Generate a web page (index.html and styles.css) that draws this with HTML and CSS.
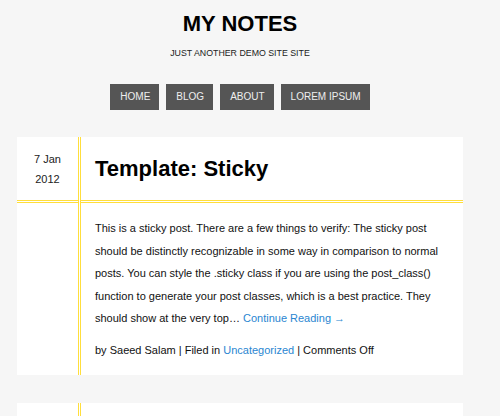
FILE: index.html
```html
<!DOCTYPE html>
<html lang="en">
<head>
<meta charset="utf-8">
<title>My Notes</title>
<link rel="stylesheet" href="styles.css">
</head>
<body>
<header class="site-header">
  <h1 class="site-title">MY NOTES</h1>
  <p class="site-tagline">JUST ANOTHER DEMO SITE SITE</p>
  <nav class="site-nav">
    <a class="nav-item" href="#">HOME</a>
    <a class="nav-item" href="#">BLOG</a>
    <a class="nav-item" href="#">ABOUT</a>
    <a class="nav-item" href="#">LOREM IPSUM</a>
  </nav>
</header>
<main class="posts">
  <article class="post">
    <div class="post-date"><span>7 Jan</span><span>2012</span></div>
    <h2 class="post-title">Template: Sticky</h2>
    <div class="post-side"></div>
    <div class="post-body">
      <p class="post-text">This is a sticky post. There are a few things to verify: The sticky post<br>should be distinctly recognizable in some way in comparison to normal<br>posts. You can style the .sticky class if you are using the post_class()<br>function to generate your post classes, which is a best practice. They<br>should show at the very top&hellip; <a class="link" href="#">Continue Reading &rarr;</a></p>
      <p class="post-meta">by Saeed Salam | Filed in <a class="link" href="#">Uncategorized</a> | Comments Off</p>
    </div>
  </article>
  <article class="post post-next">
    <div class="post-date"></div>
    <div class="post-title"></div>
  </article>
</main>
</body>
</html>
```
FILE: styles.css
```css
html, body {
  margin: 0;
  padding: 0;
}
body {
  background: #f6f6f6;
  color: #111;
  font-family: "Comic Sans MS", "Liberation Sans", sans-serif;
  overflow: hidden;
}
.site-header {
  text-align: center;
  padding-top: 10px;
  margin-right: 20px;
}
.site-title {
  margin: 0;
  font-size: 22px;
  line-height: 28px;
  font-weight: bold;
  color: #000;
}
.site-tagline {
  margin: 9px 0 0;
  font-size: 8.8px;
  line-height: 12px;
  color: #222;
}
.site-nav {
  display: flex;
  justify-content: center;
  gap: 7px;
  margin-top: 25px;
}
.nav-item {
  display: block;
  background: #555;
  color: #eee;
  text-decoration: none;
  font-size: 10px;
  line-height: 26px;
  padding: 0 9px 0 10px;
}
.posts {
  display: flex;
  flex-direction: column;
  gap: 28px;
  margin: 27px 37px 0 17px;
}
.post {
  background: #fff;
  display: grid;
  grid-template-columns: 62px 1fr;
}
.post-date,
.post-side {
  border-right: 1px solid #ffde3c;
  box-shadow: 1px 0 0 #fff, 2px 0 0 #ffde3c;
}
.post-title,
.post-body {
  margin-left: 2px;
}
.post-date,
.post-title {
  border-bottom: 3px double #ffde3c;
  height: 63px;
}
.post-next .post-date,
.post-next .post-title {
  border-bottom: none;
}
.post-date {
  display: flex;
  flex-direction: column;
  justify-content: center;
  align-items: center;
  font-size: 11px;
  line-height: 20px;
  color: #222;
}
.post-title {
  margin-top: 0;
  margin-bottom: 0;
  margin-right: 0;
  display: flex;
  align-items: center;
  padding-left: 14px;
  font-size: 22px;
  font-weight: bold;
  color: #000;
}
.post-body {
  padding: 14px 20px 13px 14px;
  font-size: 11px;
  line-height: 22.5px;
}
.post-text {
  margin: 0;
}
.post-meta {
  margin: 9.5px 0 0;
}
.link {
  color: #2a86d1;
  text-decoration: none;
}
```
